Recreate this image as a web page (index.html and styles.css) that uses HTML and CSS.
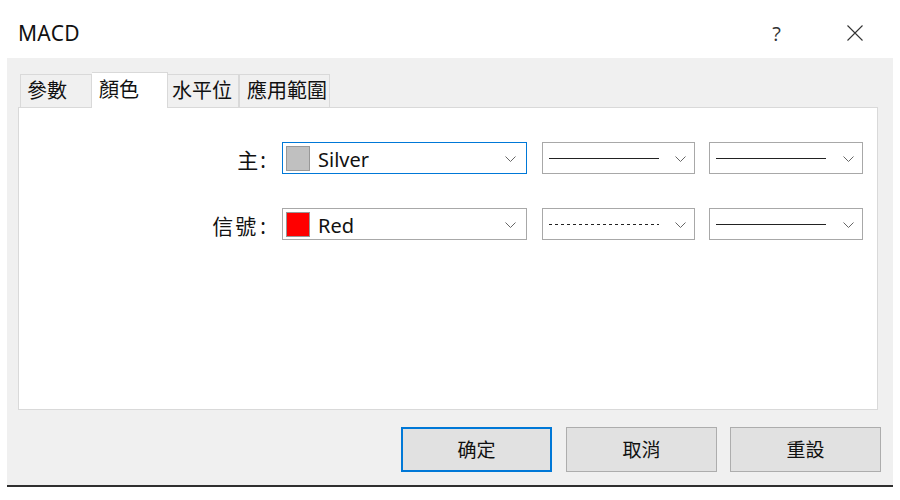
FILE: index.html
```html
<!DOCTYPE html>
<html>
<head>
<meta charset="utf-8">
<link rel="stylesheet" href="styles.css">
</head>
<body>
<div class="window">
  <div class="titlebar">
    <div class="title">MACD</div>
    <div class="help">?</div>
    <svg class="close" width="16" height="16" viewBox="0 0 16 16"><path d="M0.5 0.5 L15.5 15.5 M15.5 0.5 L0.5 15.5" stroke="#333" stroke-width="1.1" fill="none"/></svg>
  </div>
  <div class="body">
    <div class="tabs">
      <div class="tab t1">參數</div>
      <div class="tab t2 active">顏色</div>
      <div class="tab t3">水平位</div>
      <div class="tab t4">應用範圍</div>
    </div>
    <div class="panel">
      <div class="row">
        <div class="label">主<span class="colon">:</span></div>
        <div class="combo color focused">
          <span class="swatch silver"></span>
          <span class="ctext">Silver</span>
          <svg class="chev" width="11" height="6" viewBox="0 0 11 6"><polyline points="0.5,0.5 5.5,5.5 10.5,0.5" stroke="#666" fill="none"/></svg>
        </div>
        <div class="combo line l1">
          <span class="stroke solid"></span>
          <svg class="chev" width="11" height="6" viewBox="0 0 11 6"><polyline points="0.5,0.5 5.5,5.5 10.5,0.5" stroke="#666" fill="none"/></svg>
        </div>
        <div class="combo line l2">
          <span class="stroke solid"></span>
          <svg class="chev" width="11" height="6" viewBox="0 0 11 6"><polyline points="0.5,0.5 5.5,5.5 10.5,0.5" stroke="#666" fill="none"/></svg>
        </div>
      </div>
      <div class="row">
        <div class="label wide">信號<span class="colon">:</span></div>
        <div class="combo color">
          <span class="swatch red"></span>
          <span class="ctext">Red</span>
          <svg class="chev" width="11" height="6" viewBox="0 0 11 6"><polyline points="0.5,0.5 5.5,5.5 10.5,0.5" stroke="#666" fill="none"/></svg>
        </div>
        <div class="combo line l1">
          <span class="stroke dotted"></span>
          <svg class="chev" width="11" height="6" viewBox="0 0 11 6"><polyline points="0.5,0.5 5.5,5.5 10.5,0.5" stroke="#666" fill="none"/></svg>
        </div>
        <div class="combo line l2">
          <span class="stroke solid"></span>
          <svg class="chev" width="11" height="6" viewBox="0 0 11 6"><polyline points="0.5,0.5 5.5,5.5 10.5,0.5" stroke="#666" fill="none"/></svg>
        </div>
      </div>
    </div>
    <div class="buttons">
      <div class="btn default">确定</div>
      <div class="btn b2">取消</div>
      <div class="btn b3">重設</div>
    </div>
  </div>
</div>
</body>
</html>
```
FILE: styles.css
```css
* { box-sizing: border-box; }
html, body { margin: 0; padding: 0; background: #fff; }
body {
  font-family: "Noto Sans", "Noto Sans CJK TC", sans-serif;
  color: #111;
}
.window { width: 900px; height: 500px; }
.titlebar {
  height: 58px;
  display: flex;
  align-items: center;
  padding-left: 18px;
  padding-top: 8px;
}
.title { font-size: 21px; flex: 1; letter-spacing: 0.3px; }
.help { font-size: 20px; color: #333; margin-right: 66px; font-family: "Open Sans", sans-serif; }
.close { margin-right: 37px; }
.body {
  margin: 0 7px;
  height: 429px;
  background: #f0f0f0;
  border-bottom: 2px solid #2f2f2f;
  padding: 14px 12px 0 11px;
}
.tabs {
  display: flex;
  align-items: flex-end;
  height: 35px;
  padding-left: 2px;
}
.tab {
  height: 33px;
  border: 1px solid #d9d9d9;
  border-bottom: none;
  font-size: 20px;
  line-height: 32px;
  padding-left: 6px;
  background: #f0f0f0;
  white-space: nowrap;
}
.t1 { width: 72px; }
.t2 { width: 76px; }
.t3 { width: 71px; padding-left: 4px; border-left: none; }
.t4 { width: 91px; padding-left: 7px; }
.tab.active {
  height: 36px;
  background: #fff;
  border-left: none;
  margin-bottom: -1px;
  position: relative;
  z-index: 1;
  padding-left: 7px;
  line-height: 33px;
}
.panel {
  height: 303px;
  background: #fff;
  border: 1px solid #d9d9d9;
  margin-right: 3px;
  padding-top: 34px;
}
.row {
  display: flex;
  align-items: center;
  height: 32px;
  margin-bottom: 34px;
}
.label {
  width: 247px;
  text-align: right;
  font-size: 21px;
  margin-right: 16px;
  padding-top: 2px;
}
.label.wide { letter-spacing: 2px; }
.colon { margin-left: 2px; letter-spacing: 0; }
.combo {
  height: 32px;
  border: 1px solid #a8a8a8;
  background: #fff;
  display: flex;
  align-items: center;
  position: relative;
}
.combo.focused { border-color: #0078d7; }
.combo.color { width: 245px; padding-left: 3px; }
.combo.line { padding-left: 6px; }
.l1 { width: 153px; margin-left: 15px; }
.l2 { width: 154px; margin-left: 14px; }
.swatch {
  width: 24px;
  height: 25px;
  border: 1px solid #989898;
  flex: none;
}
.swatch.silver { background: #c0c0c0; }
.swatch.red { background: #ff0000; }
.ctext { font-size: 20px; margin-left: 8px; flex: 1; padding-top: 2px; }
.chev { margin-right: 10px; flex: none; margin-top: 1px; }
.line .chev { margin-right: 8px; }
.stroke { width: 110px; height: 1px; flex: none; margin-right: auto; }
.stroke.solid { background: #222; }
.stroke.dotted {
  background: repeating-linear-gradient(90deg, #222 0 3px, transparent 3px 6px);
}
.buttons {
  display: flex;
  justify-content: flex-end;
  margin-top: 17px;
}
.btn {
  width: 151px;
  height: 45px;
  background: #e1e1e1;
  border: 1px solid #adadad;
  font-size: 19px;
  display: flex;
  align-items: center;
  justify-content: center;
  padding-bottom: 1px;
}
.btn.default { border: 2px solid #0078d7; }
.b2 { margin-left: 14px; }
.b3 { margin-left: 13px; }
```
